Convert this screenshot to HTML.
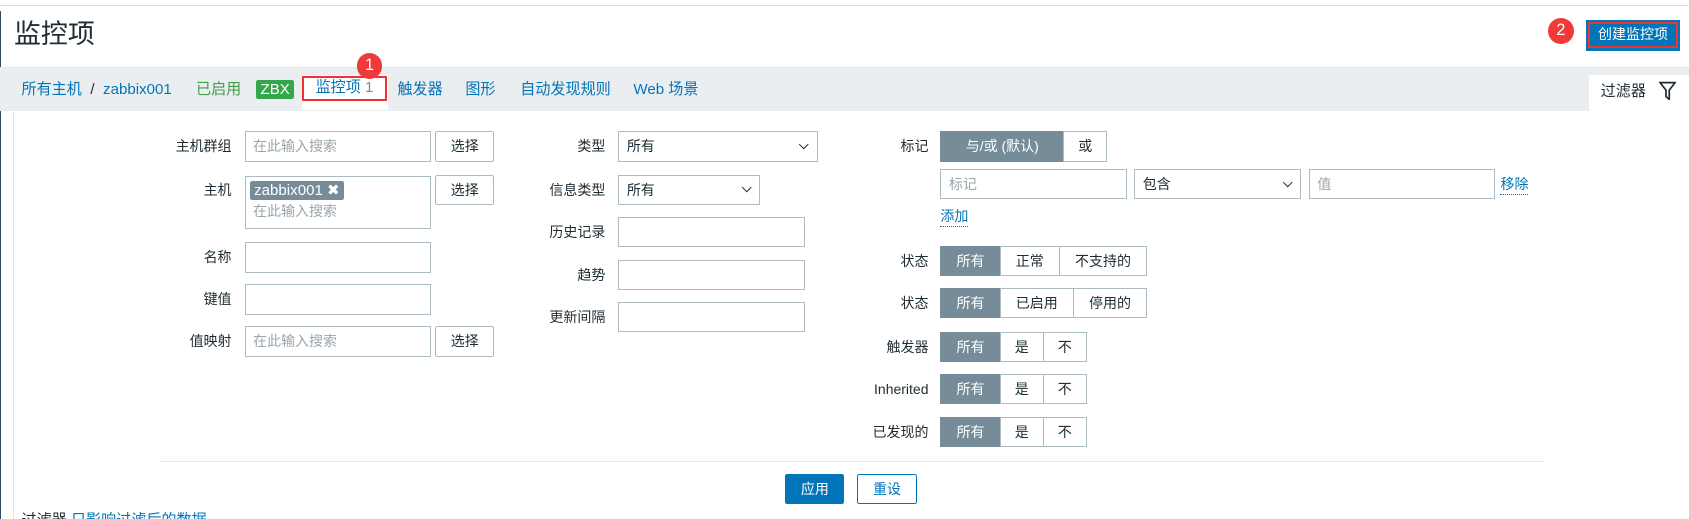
<!DOCTYPE html>
<html><head><meta charset="utf-8"><style>
html,body{margin:0;padding:0;overflow:hidden}
body{width:1568px;height:482px;zoom:1.07717;background:#fff;position:relative;font-family:"Liberation Sans","Noto Sans CJK SC",sans-serif;font-size:13px;color:#1f2c33}
.a{position:absolute;white-space:nowrap}
.lbl{position:absolute;text-align:right;line-height:28px}
.in{position:absolute;box-sizing:border-box;border:1px solid #acbbc2;background:#fff;height:28px;line-height:26px;padding-left:7px;color:#9aa5ab}
.btn{position:absolute;box-sizing:border-box;border:1px solid #acbbc2;height:28px;line-height:26px;text-align:center;background:#fff;color:#1f2c33;border-radius:2px}
.seg{position:absolute;box-sizing:border-box;border:1px solid #acbbc2;height:28px;line-height:26px;text-align:center;background:#fff}
.on{background:#768d99;color:#fff;border-color:#768d99}
.car{position:absolute;right:8px;top:8px;width:6px;height:6px;border-right:1px solid #1f2c33;border-bottom:1px solid #1f2c33;transform:rotate(45deg)}
.blue{color:#0275b8}
.nav{font-size:14px;line-height:18px;top:74px}
.badge{position:absolute;width:24px;height:24px;border-radius:12px;background:#f03a3a;color:#fff;text-align:center;line-height:24px;font-size:15px}
</style></head><body>
<div class="a" style="left:0;top:5px;width:1568px;height:1px;background:#d9dde0"></div>
<div class="a" style="left:0;top:10px;width:1px;height:472px;background:#2c4b68"></div>
<div class="a" style="left:13px;top:15px;font-size:25px;line-height:34px">监控项</div>
<div class="badge" style="left:1437px;top:17px">2</div>
<div class="a" style="left:1472px;top:19px;width:88px;height:28px;background:#0275b8;box-sizing:border-box;border:2px solid #0275b8"><div style="border:2px solid #e33;height:20px;line-height:20px;color:#fff;text-align:center;font-size:13px">创建监控项</div></div>
<div class="a" style="left:0;top:62px;width:1568px;height:40px;background:#ebeef0;border-top:1px solid #dfe4e7"></div>
<div class="a blue nav" style="left:20px">所有主机 <span style="color:#1f2c33;margin:0 4px">/</span> zabbix001</div>
<div class="a nav" style="left:182px;color:#429e47">已启用</div>
<div class="a" style="left:238px;top:74px;width:35px;height:18px;background:#35a74b;color:#fff;text-align:center;line-height:18px;border-radius:2px;font-size:14px">ZBX</div>
<div class="a" style="left:280px;top:70px;width:80px;height:32px;background:#fff"></div>
<div class="a blue" style="left:280px;top:71px;width:76px;height:19px;border:2px solid #e33;text-align:center;line-height:19px;font-size:14px">监控项 <span style="color:#768d99">1</span></div>
<div class="badge" style="left:331px;top:49px">1</div>
<div class="a blue nav" style="left:369px">触发器</div>
<div class="a blue nav" style="left:432px">图形</div>
<div class="a blue nav" style="left:483px">自动发现规则</div>
<div class="a blue nav" style="left:588px">Web 场景</div>
<div class="a" style="left:1475px;top:70px;width:93px;height:34px;background:#fff"></div>
<div class="a" style="left:1486px;top:76px;line-height:18px;font-size:14px">过滤器</div>
<svg class="a" style="left:1540px;top:75px" width="16" height="18" viewBox="0 0 16 18"><path d="M1 1.5H15L9.5 8.5V17L6.5 14.5V8.5Z" fill="none" stroke="#1f2c33" stroke-width="1.6"/></svg>
<div class="a" style="left:12px;top:104px;width:1556px;height:378px;background:#fff;border-left:1px solid #dfe4e7"></div>

<div class="lbl" style="left:100px;width:115px;top:122px">主机群组</div>
<div class="in" style="left:227px;top:122px;width:173px">在此输入搜索</div>
<div class="btn" style="left:404px;top:122px;width:55px">选择</div>
<div class="lbl" style="left:100px;width:115px;top:162px">主机</div>
<div class="in" style="left:227px;top:163px;width:173px;height:50px;line-height:20px;padding-top:3px;padding-left:4px"><span style="background:#768d99;color:#fff;padding:1px 4px;border-radius:2px;font-size:14px">zabbix001 ✖</span><br><span style="padding-left:3px">在此输入搜索</span></div>
<div class="btn" style="left:404px;top:162px;width:55px">选择</div>
<div class="lbl" style="left:100px;width:115px;top:225px">名称</div>
<div class="in" style="left:227px;top:225px;width:173px"></div>
<div class="lbl" style="left:100px;width:115px;top:264px">键值</div>
<div class="in" style="left:227px;top:264px;width:173px"></div>
<div class="lbl" style="left:100px;width:115px;top:303px">值映射</div>
<div class="in" style="left:227px;top:303px;width:173px">在此输入搜索</div>
<div class="btn" style="left:404px;top:303px;width:55px">选择</div>

<div class="lbl" style="left:450px;width:112px;top:122px">类型</div>
<div class="in" style="left:574px;top:122px;width:185px;color:#1f2c33">所有<i class="car"></i></div>
<div class="lbl" style="left:450px;width:112px;top:162px">信息类型</div>
<div class="in" style="left:574px;top:162px;width:132px;color:#1f2c33">所有<i class="car"></i></div>
<div class="lbl" style="left:450px;width:112px;top:201px">历史记录</div>
<div class="in" style="left:574px;top:201px;width:173px"></div>
<div class="lbl" style="left:450px;width:112px;top:241px">趋势</div>
<div class="in" style="left:574px;top:241px;width:173px"></div>
<div class="lbl" style="left:450px;width:112px;top:280px">更新间隔</div>
<div class="in" style="left:574px;top:280px;width:173px"></div>

<div class="lbl" style="left:760px;width:102px;top:122px">标记</div>
<div class="seg on" style="left:873px;top:122px;width:115px">与/或 (默认)</div>
<div class="seg" style="left:987px;top:122px;width:41px">或</div>
<div class="in" style="left:873px;top:157px;width:173px">标记</div>
<div class="in" style="left:1053px;top:157px;width:155px;color:#1f2c33">包含<i class="car"></i></div>
<div class="in" style="left:1215px;top:157px;width:173px">值</div>
<div class="a blue" style="left:1393px;top:162px;line-height:18px;border-bottom:1px dotted #0275b8">移除</div>
<div class="a blue" style="left:873px;top:192px;line-height:18px;border-bottom:1px dotted #0275b8">添加</div>

<div class="lbl" style="left:760px;width:102px;top:228px">状态</div>
<div class="seg on" style="left:873px;top:228px;width:56px">所有</div>
<div class="seg" style="left:928px;top:228px;width:56px">正常</div>
<div class="seg" style="left:983px;top:228px;width:82px">不支持的</div>
<div class="lbl" style="left:760px;width:102px;top:267px">状态</div>
<div class="seg on" style="left:873px;top:267px;width:56px">所有</div>
<div class="seg" style="left:928px;top:267px;width:69px">已启用</div>
<div class="seg" style="left:996px;top:267px;width:69px">停用的</div>
<div class="lbl" style="left:760px;width:102px;top:308px">触发器</div>
<div class="seg on" style="left:873px;top:308px;width:56px">所有</div>
<div class="seg" style="left:928px;top:308px;width:41px">是</div>
<div class="seg" style="left:968px;top:308px;width:41px">不</div>
<div class="lbl" style="left:760px;width:102px;top:347px">Inherited</div>
<div class="seg on" style="left:873px;top:347px;width:56px">所有</div>
<div class="seg" style="left:928px;top:347px;width:41px">是</div>
<div class="seg" style="left:968px;top:347px;width:41px">不</div>
<div class="lbl" style="left:760px;width:102px;top:387px">已发现的</div>
<div class="seg on" style="left:873px;top:387px;width:56px">所有</div>
<div class="seg" style="left:928px;top:387px;width:41px">是</div>
<div class="seg" style="left:968px;top:387px;width:41px">不</div>

<div class="a" style="left:148px;top:428px;width:1285px;height:1px;background:#e5e8ea"></div>
<div class="btn" style="left:729px;top:440px;width:55px;background:#0275b8;border-color:#0275b8;color:#fff">应用</div>
<div class="btn" style="left:796px;top:440px;width:55px;border-color:#0275b8;color:#0275b8">重设</div>
<div class="a" style="left:20px;top:474px;line-height:18px;font-size:14px">过滤器 <span class="blue">只影响过滤后的数据</span></div>
</body></html>
